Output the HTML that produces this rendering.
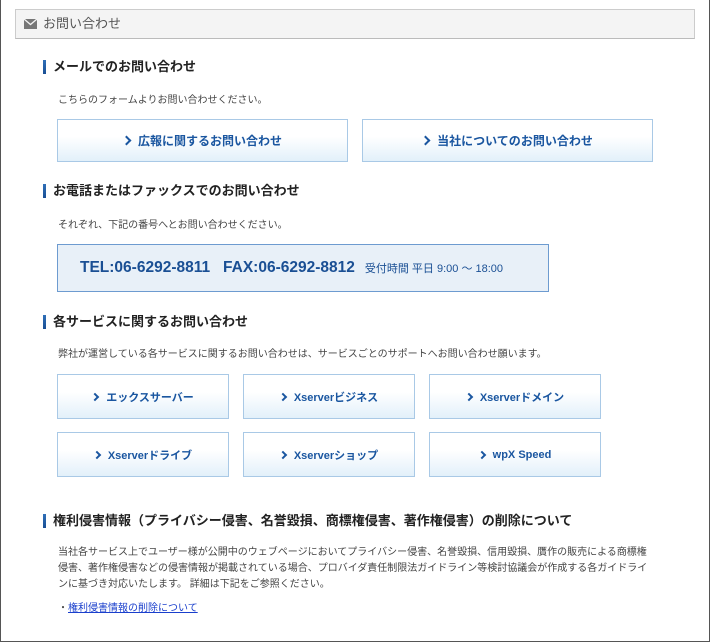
<!DOCTYPE html><html><head><meta charset="utf-8"><style>
*{margin:0;padding:0;box-sizing:border-box}
body{width:710px;height:643px;background:#fff;font-family:"Liberation Sans","Noto Sans CJK JP",sans-serif;color:#333;position:relative;overflow:hidden}
.frame{position:absolute;left:0;top:0;width:710px;height:642px;border:1px solid #555;border-top:none}
.hd{position:absolute;left:15px;top:9px;width:680px;height:30px;background:#f4f4f4;border:1px solid #ccc;border-bottom:1px solid #bbb;font-size:13px;color:#555;line-height:28px;padding-left:27px}
.hd svg{position:absolute;left:8px;top:9px}
.h2{position:absolute;left:43px;font-size:13px;font-weight:bold;color:#222;line-height:18px;padding-left:10px}
.h2:before{content:"";position:absolute;left:0;top:2px;width:3px;height:14px;background:linear-gradient(#2f6fb8,#1a4f94)}
.t{position:absolute;left:58px;font-size:10px;color:#444;line-height:16px}
.b{position:absolute;border:1px solid #a9c9e6;background:linear-gradient(#fff 40%,#e2f0fa);color:#1a56a0;font-weight:bold;display:flex;align-items:center;justify-content:center}
.b1{font-size:12px;height:43px;width:291px;top:119px}
.b2{font-size:11px;height:45px;width:172px}
.b i{display:inline-block;width:6px;height:6px;border-right:2px solid #1a56a0;border-top:2px solid #1a56a0;transform:rotate(45deg);margin-right:8px}
.b1 i{width:7px;height:7px;border-width:2.5px}
.tel{position:absolute;left:57px;top:244px;width:492px;height:48px;background:#e8f0f8;border:1px solid #6d9bd0;color:#1a4f94;font-weight:bold;font-size:15.5px;line-height:46px;padding-left:22px;white-space:nowrap}
.tel small{font-weight:normal;font-size:11px;margin-left:10px}
a{color:#1a3fcc}
</style></head><body>
<div class="frame"></div>
<div class="hd"><svg width="13" height="10" viewBox="0 0 13 10"><rect width="13" height="10" fill="#777"/><path d="M0 0L6.5 5.5L13 0" stroke="#f4f4f4" stroke-width="1.3" fill="none"/></svg>お問い合わせ</div>
<div class="h2" style="top:58px">メールでのお問い合わせ</div>
<div class="t" style="top:93px">こちらのフォームよりお問い合わせください。</div>
<div class="b b1" style="left:57px"><i></i>広報に関するお問い合わせ</div>
<div class="b b1" style="left:362px"><i></i>当社についてのお問い合わせ</div>
<div class="h2" style="top:182px">お電話またはファックスでのお問い合わせ</div>
<div class="t" style="top:218px">それぞれ、下記の番号へとお問い合わせください。</div>
<div class="tel">TEL:06-6292-8811&nbsp;&nbsp;&nbsp;FAX:06-6292-8812<small>受付時間 平日 9:00 ～ 18:00</small></div>
<div class="h2" style="top:313px">各サービスに関するお問い合わせ</div>
<div class="t" style="top:347px">弊社が運営している各サービスに関するお問い合わせは、サービスごとのサポートへお問い合わせ願います。</div>
<div class="b b2" style="left:57px;top:374px"><i></i>エックスサーバー</div>
<div class="b b2" style="left:243px;top:374px"><i></i>Xserverビジネス</div>
<div class="b b2" style="left:429px;top:374px"><i></i>Xserverドメイン</div>
<div class="b b2" style="left:57px;top:432px"><i></i>Xserverドライブ</div>
<div class="b b2" style="left:243px;top:432px"><i></i>Xserverショップ</div>
<div class="b b2" style="left:429px;top:432px"><i></i>wpX Speed</div>
<div class="h2" style="top:512px">権利侵害情報（プライバシー侵害、名誉毀損、商標権侵害、著作権侵害）の削除について</div>
<div class="t" style="top:545px;width:592px">当社各サービス上でユーザー様が公開中のウェブページにおいてプライバシー侵害、名誉毀損、信用毀損、贋作の販売による商標権侵害、著作権侵害などの侵害情報が掲載されている場合、プロバイダ責任制限法ガイドライン等検討協議会が作成する各ガイドラインに基づき対応いたします。 詳細は下記をご参照ください。</div>
<div class="t" style="top:601px">・<a href="#">権利侵害情報の削除について</a></div>
</body></html>
